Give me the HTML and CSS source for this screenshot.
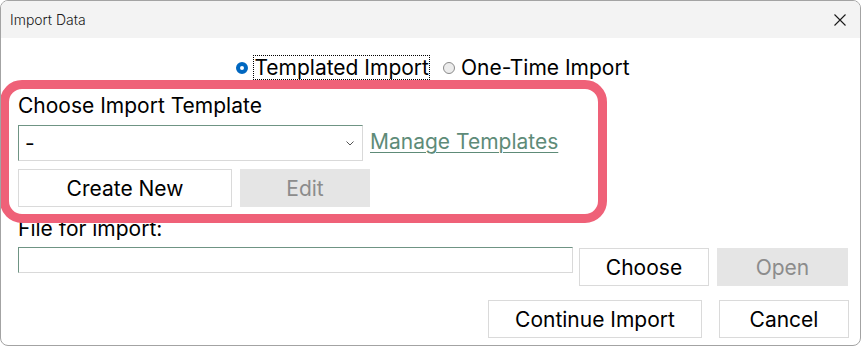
FILE: index.html
```html
<!DOCTYPE html>
<html lang="en">
<head>
    <meta charset="UTF-8">
    <title>Import Data</title>
    <link rel="stylesheet" href="styles.css">
</head>
<body>
    <div class="window">
        <div class="titlebar">
            <span class="title">Import Data</span>
            <span class="close">
                <svg width="12" height="12" viewBox="0 0 12 12"><path d="M0.5 0.5 L11.5 11.5 M11.5 0.5 L0.5 11.5" stroke="#1a1a1a" stroke-width="1.1" fill="none"/></svg>
            </span>
        </div>
        <div class="content">
            <div class="mode-row">
                <label class="radio">
                    <span class="dot checked"></span>
                    <span class="radio-text focused">Templated Import</span>
                </label>
                <label class="radio">
                    <span class="dot"></span>
                    <span class="radio-text">One-Time Import</span>
                </label>
            </div>
            <div class="field-label">Choose Import Template</div>
            <div class="select-row">
                <div class="select">
                    <span class="select-value">-</span>
                    <svg class="chevron" width="8" height="5" viewBox="0 0 8 5"><path d="M0.5 0.5 L4 4 L7.5 0.5" stroke="#555" stroke-width="1" fill="none"/></svg>
                </div>
                <a class="link" href="#">Manage Templates</a>
            </div>
            <div class="btn-row">
                <button class="btn wide">Create New</button>
                <button class="btn disabled">Edit</button>
            </div>
            <div class="field-label file-label">File for import:</div>
            <div class="file-row">
                <div class="file-input"></div>
                <button class="btn">Choose</button>
                <button class="btn disabled">Open</button>
            </div>
            <div class="action-row">
                <button class="btn wide">Continue Import</button>
                <button class="btn">Cancel</button>
            </div>
        </div>
        <!-- annotation drawn over the dialog -->
        <div class="highlight"></div>
        <div class="edge"></div>
    </div>
</body>
</html>
```

FILE: styles.css
```css
html, body {
    margin: 0;
    padding: 0;
    background-color: #FFFFFF;
}
body {
    font-family: Inter, "Noto Sans", sans-serif;
    font-weight: 380;
    color: #000;
}
.window {
    position: relative;
    width: 861px;
    height: 346px;
    box-sizing: border-box;
    border: 1px solid #a3a3a3;
    border-radius: 8px;
    background-color: #FFFFFF;
    overflow: hidden;
}
.titlebar {
    height: 37px;
    background-color: #f3f3f3;
    display: flex;
    align-items: center;
    justify-content: space-between;
    padding: 0 14px 0 9px;
}
.title {
    font-size: 14px;
    font-weight: 300;
    color: #1a1a1a;
}
.close {
    display: flex;
    margin-top: 1px;
}
.content {
    padding: 0 11px 0 17px;
}
.mode-row {
    margin-top: 17px;
    height: 25px;
    display: flex;
    justify-content: center;
    gap: 13px;
}
.radio {
    display: flex;
    align-items: center;
    gap: 5px;
    font-size: 21px;
}
.dot {
    width: 12px;
    height: 12px;
    box-sizing: border-box;
    border-radius: 50%;
    border: 1px solid #8a8a8a;
    background-color: #ececec;
    margin-top: 1px;
}
.dot.checked {
    border: 4px solid #0067c0;
    background-color: #FFFFFF;
}
.radio-text {
    height: 25px;
    line-height: 25px;
    box-sizing: border-box;
    padding: 0 1px;
}
.radio-text.focused {
    outline: 1px dotted #000;
    outline-offset: -1px;
}
.field-label {
    margin-top: 14px;
    height: 24px;
    line-height: 24px;
    font-size: 21px;
}
.select-row {
    margin-top: 7px;
    display: flex;
    align-items: center;
    gap: 7px;
}
.select {
    width: 345px;
    height: 36px;
    box-sizing: border-box;
    border: 1px solid #d9d9d9;
    border-top-color: #6f9484;
    border-left-color: #6f9484;
    display: flex;
    align-items: center;
    justify-content: space-between;
    padding: 0 8px 0 6px;
    font-size: 21px;
}
.chevron {
    margin-top: 1px;
}
.link {
    color: #5e8b78;
    font-size: 21px;
    margin-bottom: 4px;
    text-decoration: underline;
    text-underline-offset: 3px;
    text-decoration-thickness: 1px;
}
.btn-row {
    margin-top: 8px;
    display: flex;
    gap: 8px;
}
.btn {
    width: 130px;
    height: 38px;
    box-sizing: border-box;
    border: 1px solid #dadada;
    background-color: #FFFFFF;
    font-family: Inter, "Noto Sans", sans-serif;
    font-weight: 380;
    font-size: 21px;
    color: #000;
    padding: 0;
}
.btn.wide {
    width: 214px;
}
.btn.disabled {
    background-color: #e5e5e5;
    border-color: #e5e5e5;
    color: #8c8c8c;
}
.file-label {
    margin-top: 10px;
}
.file-row {
    margin-top: 6px;
    display: flex;
    align-items: flex-start;
    gap: 6px;
}
.file-row .btn {
    margin-top: 1px;
}
.file-row .btn.disabled {
    margin-left: 2px;
    width: 131px;
}
.file-input {
    width: 555px;
    height: 26px;
    box-sizing: border-box;
    border: 1px solid #d9d9d9;
    border-top-color: #6f9484;
    border-left-color: #6f9484;
}
.action-row {
    margin-top: 14px;
    display: flex;
    justify-content: flex-end;
    gap: 17px;
}
.highlight {
    position: absolute;
    left: -1px;
    top: 79px;
    width: 607px;
    height: 143px;
    box-sizing: border-box;
    border: 9px solid #ef6178;
    border-radius: 22px;
}
.edge {
    position: absolute;
    right: -1px;
    top: 157px;
    width: 1px;
    height: 130px;
    background-color: #3d4a48;
}
```
